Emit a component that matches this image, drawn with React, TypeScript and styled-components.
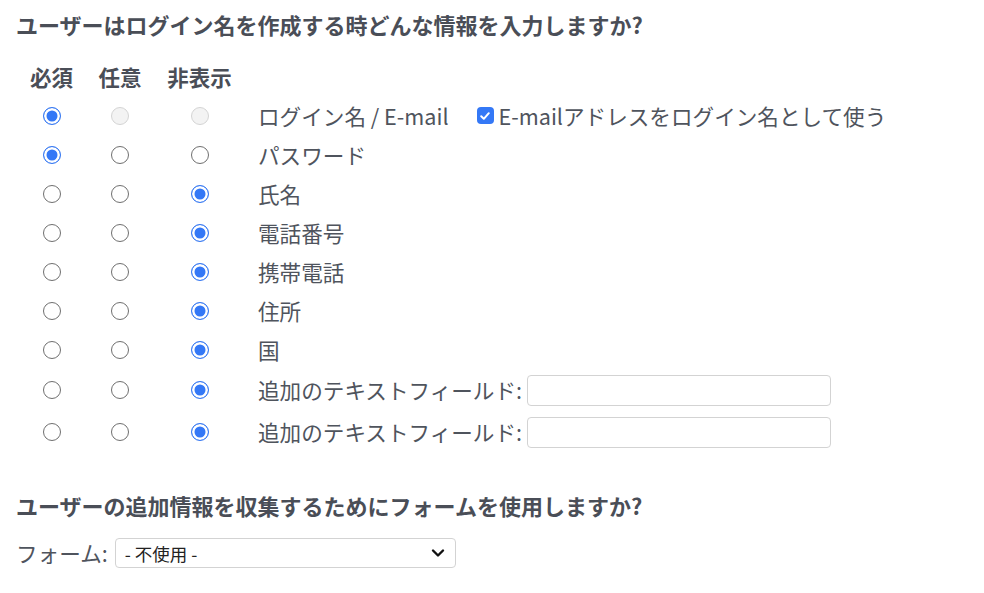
import React from 'react';
import styled, { createGlobalStyle, css } from 'styled-components';

const GlobalStyle = createGlobalStyle`
  html, body {
    margin: 0;
    padding: 0;
    background: #ffffff;
  }
  body {
    font-family: "Noto Sans CJK JP", "Noto Sans", "Liberation Sans", sans-serif;
    color: #50545c;
  }
`;

type Choice = 'required' | 'optional' | 'hidden';

interface Field {
  label: string;
  value: Choice;
  locked?: boolean;
  emailOption?: boolean;
  textInput?: boolean;
}

const fields: Field[] = [
  { label: 'ログイン名 / E-mail', value: 'required', locked: true, emailOption: true },
  { label: 'パスワード', value: 'required' },
  { label: '氏名', value: 'hidden' },
  { label: '電話番号', value: 'hidden' },
  { label: '携帯電話', value: 'hidden' },
  { label: '住所', value: 'hidden' },
  { label: '国', value: 'hidden' },
  { label: '追加のテキストフィールド:', value: 'hidden', textInput: true },
  { label: '追加のテキストフィールド:', value: 'hidden', textInput: true },
];

const choices: Choice[] = ['required', 'optional', 'hidden'];

export default function App() {
  return (
    <Page>
      <GlobalStyle />
      <Title>ユーザーはログイン名を作成する時どんな情報を入力しますか?</Title>

      <FieldTable>
        <HeadRow>
          <HeadCell>必須</HeadCell>
          <HeadCell>任意</HeadCell>
          <HeadCell>非表示</HeadCell>
          <span />
        </HeadRow>
        {fields.map((field, i) => (
          <FieldRow key={i} $tall={field.textInput}>
            {choices.map((c) => (
              <RadioCell key={c}>
                <Radio
                  type="radio"
                  name={`field-${i}`}
                  defaultChecked={field.value === c}
                  disabled={field.locked && field.value !== c}
                />
              </RadioCell>
            ))}
            <LabelCell>
              <FieldLabel>{field.label}</FieldLabel>
              {field.emailOption && (
                <CheckLabel>
                  <CheckBox>
                    <svg width="12" height="12" viewBox="0 0 12 12">
                      <path d="M2.2 6.3 L4.8 8.8 L9.8 3.2" fill="none" stroke="#fff" strokeWidth="2" strokeLinecap="round" strokeLinejoin="round" />
                    </svg>
                  </CheckBox>
                  E-mailアドレスをログイン名として使う
                </CheckLabel>
              )}
              {field.textInput && <TextBox type="text" />}
            </LabelCell>
          </FieldRow>
        ))}
      </FieldTable>

      <Title $spaced>ユーザーの追加情報を収集するためにフォームを使用しますか?</Title>

      <FormRow>
        <FieldLabel>フォーム:</FieldLabel>
        <SelectWrap>
          <Select defaultValue="none">
            <option value="none">- 不使用 -</option>
          </Select>
          <Chevron width="14" height="10" viewBox="0 0 14 10">
            <path d="M2 2.5 L7 7.5 L12 2.5" fill="none" stroke="#111" strokeWidth="2.4" strokeLinecap="round" strokeLinejoin="round" />
          </Chevron>
        </SelectWrap>
      </FormRow>
    </Page>
  );
}

const Page = styled.div`
  padding: 9px 16px 20px 16px;
`;

const Title = styled.h2<{ $spaced?: boolean }>`
  margin: ${(p) => (p.$spaced ? '37px' : '0')} 0 0 0;
  font-size: 22px;
  line-height: 30px;
  font-weight: 700;
  color: #4a4e57;
  letter-spacing: 0;
`;

const FieldTable = styled.div`
  margin-top: 18px;
  display: flex;
  flex-direction: column;
`;

const rowGrid = css`
  display: grid;
  grid-template-columns: 71px 66px 93px auto;
  align-items: center;
  box-sizing: border-box;
`;

const HeadRow = styled.div`
  ${rowGrid};
  height: 39px;
`;

const HeadCell = styled.div`
  text-align: center;
  font-size: 21.5px;
  font-weight: 700;
  color: #4a4e57;
`;

const FieldRow = styled.div<{ $tall?: boolean }>`
  ${rowGrid};
  min-height: 39px;
  padding: ${(p) => (p.$tall ? '5.5px 0' : '0')};
`;

const RadioCell = styled.div`
  display: flex;
  justify-content: center;
`;

const Radio = styled.input`
  appearance: none;
  margin: 0;
  width: 18px;
  height: 18px;
  border-radius: 50%;
  border: 1px solid #6f6f6f;
  background: #ffffff;
  box-sizing: border-box;

  &:checked {
    border: 1.5px solid #3a7bf2;
    background: #3478f6;
    box-shadow: inset 0 0 0 2.5px #ffffff;
  }

  &:disabled {
    border-color: #d4d4d4;
    background: #f3f3f3;
  }
`;

const LabelCell = styled.div`
  display: flex;
  align-items: center;
  padding-left: 12px;
  line-height: 30px;
`;

const FieldLabel = styled.span`
  font-size: 21.6px;
  color: #4f545d;
  white-space: nowrap;
  line-height: 30px;
`;

const CheckLabel = styled.label`
  display: flex;
  align-items: center;
  gap: 5px;
  margin-left: 28px;
  font-size: 21.6px;
  color: #4f545d;
  white-space: nowrap;
`;

const CheckBox = styled.span`
  display: inline-flex;
  align-items: center;
  justify-content: center;
  width: 17px;
  height: 17px;
  border-radius: 4px;
  background: #3478f6;
`;

const TextBox = styled.input`
  margin-left: 5px;
  width: 304px;
  height: 31px;
  box-sizing: border-box;
  border: 1px solid #d3d3d3;
  border-radius: 4px;
  background: #ffffff;
  font-size: 16px;
  padding: 0 8px;
  outline: none;
`;

const FormRow = styled.div`
  margin-top: 18px;
  display: flex;
  align-items: center;
  gap: 7px;
`;

const SelectWrap = styled.div`
  position: relative;
  width: 341px;
  height: 30px;
`;

const Select = styled.select`
  appearance: none;
  width: 100%;
  height: 100%;
  box-sizing: border-box;
  border: 1px solid #d3d3d3;
  border-radius: 4px;
  background: #ffffff;
  padding: 0 30px 0 9px;
  font-family: "Noto Sans CJK JP", "Noto Sans", sans-serif;
  font-size: 17.5px;
  color: #222222;
  outline: none;
`;

const Chevron = styled.svg`
  position: absolute;
  right: 11px;
  top: 10px;
  pointer-events: none;
`;
